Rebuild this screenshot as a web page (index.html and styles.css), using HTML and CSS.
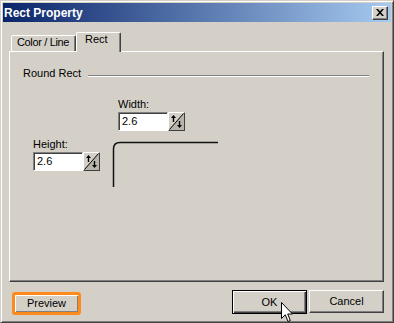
FILE: index.html
```html
<!DOCTYPE html>
<html>
<head>
<meta charset="utf-8">
<link rel="stylesheet" href="styles.css">
</head>
<body>
<div class="window">
  <div class="titlebar">
    <span class="title">Rect Property</span>
    <span class="close"><svg width="8" height="7" viewBox="0 0 8 7"><path d="M0 0h2l2 2.2L6 0h2L5 3.5 8 7H6L4 4.8 2 7H0l3-3.5z" fill="#000"/></svg></span>
  </div>
  <div class="body">
    <div class="tabs">
      <div class="tab tab-color">Color / Line</div>
      <div class="tab tab-active">Rect</div>
    </div>
    <div class="panel">
      <div class="group-head"><span>Round Rect</span><span class="rule"></span></div>
      <div class="fields">
        <div class="field field-width">
          <div class="label">Width:</div>
          <div class="spin-input">
            <span class="box">2.6</span>
            <span class="spin"><svg width="15" height="17" viewBox="0 0 15 17"><path d="M15 0L0 17H15Z" fill="#b8b4ac"/><path d="M0.5 16.5L14.5 0.5" stroke="#000" stroke-width="1"/><path d="M4.5 9V4" stroke="#000" stroke-width="1.4"/><path d="M2 5L4.5 2 7 5Z" fill="#000"/><path d="M10.5 8V13" stroke="#000" stroke-width="1.4"/><path d="M8 12L10.5 15 13 12Z" fill="#000"/></svg></span>
          </div>
        </div>
        <div class="field field-height">
          <div class="label">Height:</div>
          <div class="spin-input">
            <span class="box">2.6</span>
            <span class="spin"><svg width="15" height="17" viewBox="0 0 15 17"><path d="M15 0L0 17H15Z" fill="#b8b4ac"/><path d="M0.5 16.5L14.5 0.5" stroke="#000" stroke-width="1"/><path d="M4.5 9V4" stroke="#000" stroke-width="1.4"/><path d="M2 5L4.5 2 7 5Z" fill="#000"/><path d="M10.5 8V13" stroke="#000" stroke-width="1.4"/><path d="M8 12L10.5 15 13 12Z" fill="#000"/></svg></span>
          </div>
        </div>
        <svg class="corner" width="110" height="46" viewBox="0 0 110 46"><path d="M1.5 46V8Q1.5 1.5 8 1.5H106" fill="none" stroke="#111" stroke-width="1.5"/></svg>
      </div>
    </div>
    <div class="buttons">
      <div class="highlight"><span class="btn-inner">Preview</span></div>
      <div class="btn btn-default">OK</div>
      <div class="btn btn-cancel">Cancel</div>
    </div>
  </div>
  <svg class="cursor" width="13" height="21" viewBox="0 0 13 21"><path d="M0.5 0.5V16.5L4.3 12.8 7 19.5 9.3 18.5 6.7 12H11.5Z" fill="#fff" stroke="#000" stroke-width="1" stroke-linejoin="miter"/></svg>
</div>
</body>
</html>
```
FILE: styles.css
```css
* { box-sizing: border-box; }
body {
  margin: 0;
  font-family: "Liberation Sans", Arial, sans-serif;
  font-size: 11px;
  color: #000;
  background: #d4d0c8;
}
.window {
  position: relative;
  width: 394px;
  height: 323px;
  background: #d4d0c8;
  border: 1px solid;
  border-color: #d4d0c8 #404040 #404040 #d4d0c8;
  box-shadow: inset 1px 1px #fff, inset -1px -1px #808080;
  padding: 2px;
  display: flex;
  flex-direction: column;
  overflow: hidden;
}
.titlebar {
  height: 19px;
  background: linear-gradient(to right, #0a246a, #a6caf0);
  display: flex;
  align-items: center;
  justify-content: space-between;
  padding: 0 3px 0 1px;
  color: #fff;
  font-weight: bold;
  font-size: 12px;
}
.close {
  width: 16px;
  height: 14px;
  background: #d4d0c8;
  border: 1px solid;
  border-color: #fff #404040 #404040 #fff;
  box-shadow: inset -1px -1px #808080;
  display: flex;
  align-items: center;
  justify-content: center;
}
.body {
  flex: 1;
  padding: 10px 7px 0 6px;
  display: flex;
  flex-direction: column;
}
.tabs {
  display: flex;
  align-items: flex-end;
  height: 19px;
  padding-left: 2px;
}
.tab {
  height: 16px;
  line-height: 13px;
  border: 1px solid;
  border-bottom: none;
  border-color: #fff #404040 transparent #fff;
  box-shadow: inset -1px 0 #808080;
  border-radius: 2px 2px 0 0;
  background: #d4d0c8;
  white-space: nowrap;
}
.tab-color {
  width: 65px;
  padding-left: 5px;
  letter-spacing: -0.35px;
}
.tab-active {
  width: 45px;
  height: 20px;
  padding-left: 8px;
  margin-bottom: -1px;
  position: relative;
  z-index: 1;
}
.panel {
  height: 231px;
  border: 1px solid;
  border-color: #fff #404040 #404040 #fff;
  box-shadow: inset -1px -1px #808080;
  padding: 15px 14px 0 13px;
}
.group-head {
  display: flex;
  align-items: flex-start;
  height: 13px;
  line-height: 13px;
}
.rule {
  flex: 1;
  margin: 8px 0 0 7px;
  height: 2px;
  border-top: 1px solid #808080;
  border-bottom: 1px solid #fff;
}
.fields {
  display: grid;
  grid-template-columns: 79px auto;
  margin: 18px 0 0 10px;
  align-items: start;
}
.label {
  line-height: 13px;
  height: 13px;
}
.field-width {
  grid-column: 2;
  grid-row: 1;
  margin-left: 6px;
}
.field-height {
  grid-column: 1;
  grid-row: 2;
  margin-top: 7px;
}
.corner {
  grid-column: 2;
  grid-row: 2;
  margin-top: 10px;
  display: block;
}
.spin-input {
  display: flex;
  margin-top: 1px;
  height: 19px;
}
.box {
  width: 50px;
  height: 19px;
  background: #fff;
  border: 1px solid;
  border-color: #808080 #fff #fff #808080;
  box-shadow: inset 1px 1px #404040;
  padding-left: 3px;
  line-height: 17px;
}
.spin {
  width: 17px;
  height: 19px;
  background: #d4d0c8;
  border: 1px solid;
  border-color: #fff #404040 #404040 #fff;
  display: flex;
}
.spin svg { display: block; }
.buttons {
  display: flex;
  align-items: flex-start;
  margin-top: 8px;
}
.highlight {
  margin: 2px 0 0 3px;
  width: 69px;
  height: 23px;
  border: 3px solid #ff8a1c;
  border-radius: 3px;
  display: flex;
}
.btn-inner {
  flex: 1;
  background: #d4d0c8;
  box-shadow: inset 1px 1px #fff, inset -1px -1px #808080;
  text-align: center;
  line-height: 17px;
}
.btn {
  width: 75px;
  height: 23px;
  line-height: 21px;
  text-align: center;
  background: #d4d0c8;
  border: 1px solid;
}
.btn-default {
  margin-left: auto;
  height: 24px;
  line-height: 22px;
  border-color: #000;
  box-shadow: inset 1px 1px #fff, inset -1px -1px #404040, inset -2px -2px #808080;
}
.btn-cancel {
  margin-left: 2px;
  border-color: #fff #404040 #404040 #fff;
  box-shadow: inset -1px -1px #808080;
}
.cursor {
  position: absolute;
  left: 280px;
  top: 301px;
  z-index: 5;
}
```
